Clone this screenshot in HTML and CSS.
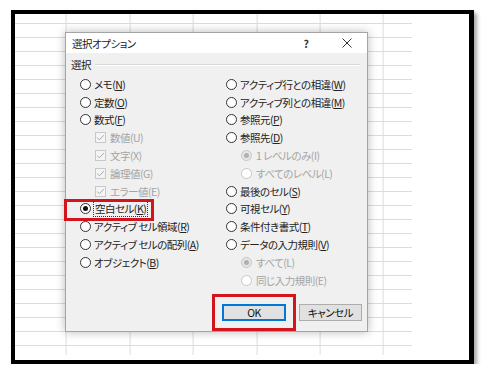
FILE: index.html
```html
<!DOCTYPE html>
<html lang="ja">
<head>
<meta charset="utf-8">
<title>選択オプション</title>
<link rel="stylesheet" href="styles.css">
</head>
<body>
<div class="frame">
  <div class="sheet">
    <div class="dialog">
      <div class="titlebar">
        <span class="title">選択オプション</span>
        <span class="help">?</span>
        <svg class="close" width="10" height="10" viewBox="0 0 10 10"><path d="M0.5 0.5L9.5 9.5M9.5 0.5L0.5 9.5" stroke="#333" stroke-width="1" fill="none"/></svg>
      </div>
      <div class="body">
        <div class="group-label"><span>選択</span><span class="rule"></span></div>
        <div class="cols">
          <div class="col col-left">
            <div class="row"><span class="radio"></span><span>メモ(<u>N</u>)</span></div>
            <div class="row"><span class="radio"></span><span>定数(<u>O</u>)</span></div>
            <div class="row"><span class="radio"></span><span>数式(<u>F</u>)</span></div>
            <div class="row sub dis"><svg class="check" width="11" height="11" viewBox="0 0 11 11"><rect x="0.5" y="0.5" width="10" height="10" fill="#f4f4f4" stroke="#c8c8c8"/><path d="M2.2 5.6L4.4 7.8L8.8 3.2" stroke="#a8a8a8" stroke-width="1" fill="none"/></svg><span>数値(U)</span></div>
            <div class="row sub dis"><svg class="check" width="11" height="11" viewBox="0 0 11 11"><rect x="0.5" y="0.5" width="10" height="10" fill="#f4f4f4" stroke="#c8c8c8"/><path d="M2.2 5.6L4.4 7.8L8.8 3.2" stroke="#a8a8a8" stroke-width="1" fill="none"/></svg><span>文字(X)</span></div>
            <div class="row sub dis"><svg class="check" width="11" height="11" viewBox="0 0 11 11"><rect x="0.5" y="0.5" width="10" height="10" fill="#f4f4f4" stroke="#c8c8c8"/><path d="M2.2 5.6L4.4 7.8L8.8 3.2" stroke="#a8a8a8" stroke-width="1" fill="none"/></svg><span>論理値(G)</span></div>
            <div class="row sub dis"><svg class="check" width="11" height="11" viewBox="0 0 11 11"><rect x="0.5" y="0.5" width="10" height="10" fill="#f4f4f4" stroke="#c8c8c8"/><path d="M2.2 5.6L4.4 7.8L8.8 3.2" stroke="#a8a8a8" stroke-width="1" fill="none"/></svg><span>エラー値(E)</span></div>
            <div class="row marked"><span class="radio on"></span><span class="focus">空白セル(<u>K</u>)</span></div>
            <div class="row"><span class="radio"></span><span>アクティブ セル領域(<u>R</u>)</span></div>
            <div class="row"><span class="radio"></span><span>アクティブ セルの配列(<u>A</u>)</span></div>
            <div class="row"><span class="radio"></span><span>オブジェクト(<u>B</u>)</span></div>
          </div>
          <div class="col col-right">
            <div class="row"><span class="radio"></span><span>アクティブ行との相違(<u>W</u>)</span></div>
            <div class="row"><span class="radio"></span><span>アクティブ列との相違(<u>M</u>)</span></div>
            <div class="row"><span class="radio"></span><span>参照元(<u>P</u>)</span></div>
            <div class="row"><span class="radio"></span><span>参照先(<u>D</u>)</span></div>
            <div class="row sub dis"><span class="radio on"></span><span>1 レベルのみ(I)</span></div>
            <div class="row sub dis"><span class="radio"></span><span>すべてのレベル(L)</span></div>
            <div class="row"><span class="radio"></span><span>最後のセル(<u>S</u>)</span></div>
            <div class="row"><span class="radio"></span><span>可視セル(<u>Y</u>)</span></div>
            <div class="row"><span class="radio"></span><span>条件付き書式(<u>T</u>)</span></div>
            <div class="row"><span class="radio"></span><span>データの入力規則(<u>V</u>)</span></div>
            <div class="row sub dis"><span class="radio on"></span><span>すべて(L)</span></div>
            <div class="row sub dis"><span class="radio"></span><span>同じ入力規則(E)</span></div>
          </div>
        </div>
        <div class="buttons">
          <span class="mark-ok"><span class="btn btn-ok">OK</span></span>
          <span class="btn">キャンセル</span>
        </div>
      </div>
    </div>
  </div>
</div>
</body>
</html>
```
FILE: styles.css
```css
* { box-sizing: border-box; }
html, body { margin: 0; padding: 0; background: #fff; }
body {
  font-family: "Noto Sans CJK JP", "Noto Sans", sans-serif;
  font-size: 10.5px;
  letter-spacing: -0.5px;
  font-feature-settings: "palt";
  color: #222;
}
.frame {
  margin: 10px 0 0 11px;
  width: 463px;
  height: 354px;
  border: 4px solid #000;
  border-right-width: 5px;
  box-shadow: 3px 3px 4px rgba(0,0,0,0.35);
  background: #fff;
}
.sheet {
  position: relative;
  width: 397px;
  height: 341px;
  background-image:
    repeating-linear-gradient(to bottom, transparent 0 13px, #dcdcdc 13px 14px),
    repeating-linear-gradient(to right, transparent 0 62.4px, #dcdcdc 62.4px 63.4px);
  background-position: 0 -4px, -11.4px 0;
}
.dialog {
  position: absolute;
  left: 50px;
  top: 18px;
  width: 303px;
  height: 300px;
  border: 1px solid #a4a4a4;
  background: #f0f0f0;
  box-shadow: 0 0 9px rgba(0,0,0,0.28);
  display: flex;
  flex-direction: column;
}
.titlebar {
  height: 23px;
  background: #fff;
  display: flex;
  align-items: center;
  padding: 0 15px 0 6px;
}
.title { flex: 1; color: #222; }
.help {
  width: 10px;
  text-align: center;
  font-weight: bold;
  color: #333;
  margin-right: 31px;
}
.close { display: block; }
.body {
  flex: 1;
  padding: 5px 7px 0 5px;
}
.group-label {
  display: flex;
  align-items: center;
  height: 14px;
  line-height: 14px;
}
.rule {
  flex: 1;
  margin-left: 4px;
  height: 2px;
  border-top: 1px solid #d8d8d8;
  border-bottom: 1px solid #fff;
}
.cols {
  display: flex;
  margin-top: 3px;
}
.col {
  display: flex;
  flex-direction: column;
  align-items: flex-start;
}
.col-left { width: 155px; padding-left: 9px; }
.col-right { flex: 1; }
.row {
  height: 17.8px;
  display: flex;
  align-items: center;
  gap: 3px;
  white-space: nowrap;
}
.row.sub { margin-left: 15px; gap: 4px; }
.dis { color: #a4a4a4; }
.radio {
  width: 11px;
  height: 11px;
  border: 1px solid #333;
  border-radius: 50%;
  background: #fff;
  display: flex;
  align-items: center;
  justify-content: center;
  flex: none;
}
.radio.on::before {
  content: "";
  width: 5px;
  height: 5px;
  border-radius: 50%;
  background: #111;
}
.dis .radio { border-color: #c6c6c6; background: #fff; }
.dis .radio.on { background: #e6e6e6; }
.dis .radio.on::before { background: #b0b0b0; }
.check { display: block; flex: none; }
u { text-decoration-thickness: 1px; text-underline-offset: 1px; }
.marked { position: relative; }
.marked::after {
  content: "";
  position: absolute;
  left: -16px;
  right: -7px;
  top: -1px;
  bottom: -3px;
  border: 3px solid #d3141c;
}
.focus {
  outline: 1px dotted #333;
  outline-offset: 0;
  padding: 0 1px;
  line-height: 14px;
}
.buttons {
  display: flex;
  justify-content: flex-end;
  align-items: center;
  margin-top: 5px;
  gap: 3px;
  margin-right: -2px;
}
.mark-ok {
  border: 3px solid #d3141c;
  padding: 7px;
}
.btn {
  display: flex;
  align-items: center;
  justify-content: center;
  width: 63px;
  height: 17px;
  background: #e1e1e1;
  border: 1px solid #adadad;
  color: #111;
}
.btn-ok {
  width: 64px;
  border: 2px solid #0078d7;
}
```
